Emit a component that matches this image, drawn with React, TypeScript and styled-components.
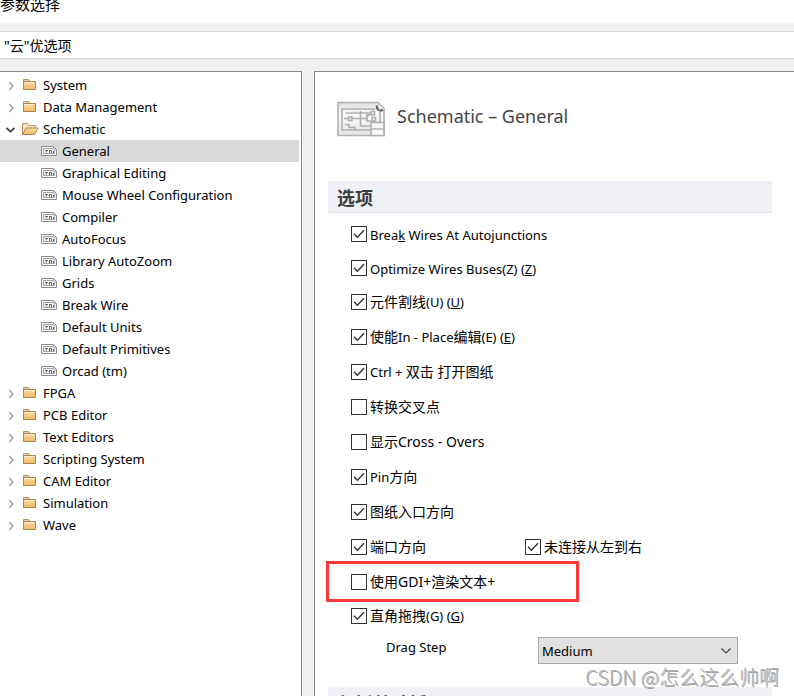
import React from "react";
import styled, { createGlobalStyle, css } from "styled-components";

const Global = createGlobalStyle`
  *, *::before, *::after { box-sizing: border-box; }
  body {
    margin: 0;
    background: #f0f0f0;
    color: #000;
    font: 13px/22px "Noto Sans", "Noto Sans CJK SC", sans-serif;
  }
`;

const Page = styled.div`
  position: relative;
  height: 100vh;
  display: flex;
  flex-direction: column;
  overflow: hidden;
`;
const TitleBar = styled.header`
  flex: none;
  height: 23px;
  background: #fff;
  overflow: hidden;
`;
const Title = styled.h1`
  margin: -7px 0 0;
  font-size: 15px;
  line-height: 22px;
  font-weight: 400;
`;
const SubBar = styled.div`
  flex: none;
  height: 28px;
  margin-top: 8px;
  padding: 0 4px;
  border: solid #d9d9d9;
  border-width: 1px 0;
  background: #fff;
  font-size: 14px;
  line-height: 28px;
`;
const Columns = styled.div`
  flex: 1;
  min-height: 0;
  margin-top: 12px;
  display: grid;
  grid-template-columns: 302px 1fr;
  column-gap: 12px;
`;
const Tree = styled.nav`
  padding: 2px 2px 0 0;
  border: solid #828790;
  border-width: 1px 1px 0 0;
  background: #fff;
`;
const List = styled.ul`
  margin: 0;
  padding: 0;
  list-style: none;
`;
const TreeRow = styled.button<{ $child?: boolean; $selected?: boolean }>`
  display: flex;
  align-items: center;
  width: 100%;
  height: 22px;
  padding: 0 0 0 ${(p) => (p.$child ? 41 : 4)}px;
  border: 0;
  background: ${(p) => (p.$selected ? "#d9d9d9" : "transparent")};
  color: inherit;
  font: inherit;
  text-align: left;
  svg { flex: none; }
`;
const RowIcon = styled.span`
  display: flex;
  width: 21px;
`;
const ArrowSlot = styled.span`
  display: flex;
  width: 18px;
`;

const Content = styled.main`
  min-width: 0;
  padding: 0 22px 0 13px;
  border: solid #828790;
  border-width: 1px 0 0 1px;
  background: #fff;
  overflow: hidden;
`;
const PageHead = styled.div`
  display: flex;
  align-items: flex-start;
  gap: 12px;
  height: 109px;
  padding: 29px 0 0 9px;
`;
const PageTitle = styled.h2`
  margin: 0;
  color: #444;
  font-size: 18px;
  line-height: 30px;
  font-weight: 400;
`;
const SectionHead = styled.h3`
  height: 32px;
  margin: 0;
  padding: 0 9px;
  border-bottom: 1px solid #dfe1e8;
  background: #f0f1f6;
  color: #3c3c3c;
  font-size: 18px;
  line-height: 34px;
  font-weight: 700;
`;
const Options = styled.div`
  padding: 4px 0 0 23px;
`;
const OptionRow = styled.div<{ $compact?: boolean }>`
  position: relative;
  display: grid;
  grid-template-columns: 174px 1fr;
  align-items: center;
  height: ${(p) => (p.$compact ? 34 : 35)}px;
`;
const OptionLabel = styled.label`
  display: flex;
  align-items: center;
  gap: 3px;
  white-space: nowrap;
`;
const Text = styled.span<{ $cjk?: boolean }>`
  line-height: 20px;
  padding-top: 2px;
  ${(p) => p.$cjk && css`
    padding-top: 0;
    font-size: 14px;
  `}
`;
const Latin = styled.span`
  font-size: 13px;
  white-space: pre;
`;
const BoxWrap = styled.span`
  display: grid;
  width: 16px;
  height: 16px;
  > * { grid-area: 1 / 1; }
  svg { pointer-events: none; visibility: hidden; }
  input:checked + svg { visibility: visible; }
`;
const Box = styled.input`
  appearance: none;
  width: 16px;
  height: 16px;
  margin: 0;
  border: 1px solid #333;
  background: #fff;
`;
const Highlight = styled.span`
  position: absolute;
  inset: -3px auto -3px -25px;
  width: 253px;
  border: 3px solid #fc3a3a;
  pointer-events: none;
`;
const StepRow = styled.div`
  display: grid;
  grid-template-columns: 152px 200px;
  padding: 3px 0 23px 35px;
`;
const StepLabel = styled.label`
  line-height: 22px;
`;
const SelectWrap = styled.span`
  display: grid;
  margin-top: 1px;
  > * { grid-area: 1 / 1; }
  svg { place-self: center end; margin-right: 6px; pointer-events: none; }
`;
const Select = styled.select`
  appearance: none;
  height: 27px;
  padding: 0 3px;
  border: 1px solid #adadad;
  border-radius: 0;
  background: #e1e1e1;
  color: #000;
  font: inherit;
`;
const Watermark = styled.div`
  position: absolute;
  right: 15px;
  bottom: 5px;
  color: #b0b0b0;
  font: 20px/28px "Noto Sans CJK SC", sans-serif;
  font-weight: 300;
  text-shadow: 1px 1px 0 #a4a4a4;
  pointer-events: none;
`;

const Chevron = ({ open }: { open?: boolean }) =>
  open ? (
    <svg width="14" height="14" viewBox="0 0 14 14" fill="none" stroke="#404040" strokeWidth="1.7">
      <path d="M2.5 6l4 3.6 4-3.6" />
    </svg>
  ) : (
    <svg width="14" height="14" viewBox="0 0 14 14" fill="none" stroke="#a6a6a6" strokeWidth="1.6">
      <path d="M5.2 4l3.8 4-3.8 4" />
    </svg>
  );

const Folder = ({ open }: { open?: boolean }) => (
  <svg width="17" height="14" viewBox="0 0 17 14">
    <defs>
      <linearGradient id="folder" x1="0" y1="0" x2="0" y2="1">
        <stop offset="0" stopColor="#fbdfae" />
        <stop offset="1" stopColor="#efb660" />
      </linearGradient>
    </defs>
    {open ? (
      <>
        <path d="M.5 12.500V1.500h5l1.500 2h6.500v2" fill="#f7e3be" stroke="#b39463" />
        <path d="M.5 12.500l3.500-6.500h12l-3.500 6.500z" fill="url(#folder)" stroke="#a9864f" />
      </>
    ) : (
      <>
        <path d="M1.500 11.500V1.500h5l1.500 2" fill="#ecd3a3" stroke="#b39463" />
        <path d="M1.500 3.500h12v8h-12z" fill="url(#folder)" stroke="#a9864f" />
        <path d="M2.500 4.500h10" stroke="#fff0d0" />
      </>
    )}
  </svg>
);

const Sheet = () => (
  <svg width="16" height="12" viewBox="0 0 16 12" fill="none" stroke="#8c8c8c">
    <path d="M.5 1.500h12l3 3v6H.5z" fill="#f8f8f8" />
    <path d="M12.500 1.500v3h3" stroke="#b5b5b5" />
    <path d="M2.500 3.500h9.500M2.500 3.500v5h11v-3" stroke="#a2a2a2" />
    <path d="M4 5.500h3M5.500 5.500v2M8.500 5.500h2M8.500 5v3M10.500 5.500v3M12.500 6v2" stroke="#6e6e6e" />
  </svg>
);

const SheetLarge = () => (
  <svg width="48" height="36" viewBox="0 0 48 36" fill="none" stroke="#b0b0b0" strokeWidth="1.6">
    <defs>
      <linearGradient id="sheet" x1="0" y1="0" x2="0" y2="1">
        <stop offset="0" stopColor="#dedede" />
        <stop offset=".35" stopColor="#fafafa" />
        <stop offset="1" stopColor="#e6e6e6" />
      </linearGradient>
    </defs>
    <path d="M1 1.500h40l6 6V34.500H1z" fill="url(#sheet)" />
    <path d="M38 8H5v21h28M43 11v10" />
    <path d="M8.500 12h26M7 17.500h4M15 17.500h15M23.500 10v15h10M8 23.500h4v3h6v3M30 13v7h5M30 15.500l4-3" />
    <path d="M11.500 16h3.500v3.500h-3.500zM34 10.500h3.500v3.500H34zM35 16.500h3.500v3.500H35z" fill="#eee" />
    <path d="M34 21.500h13v13H34zM34 28h13" fill="#fafafa" />
    <path d="M41 1.500c1 2 1 5 0 7 2-1 4-1 6 0z" fill="#fff" stroke="#c4c4c4" strokeWidth="1" />
    <path d="M39 4c-.5 3 .5 6 4.500 6.500 1.500 0 2.500-.5 3-1.500-2-.8-3.500-.5-5 0 .3-2-.5-4-2.500-5z" fill="#555" stroke="none" />
  </svg>
);

function Option({ name, checked, children, latin }: {
  name: string; checked?: boolean; latin?: boolean; children: React.ReactNode;
}) {
  return (
    <OptionLabel htmlFor={name}>
      <BoxWrap>
        <Box id={name} type="checkbox" defaultChecked={checked} />
        <svg width="16" height="16" viewBox="0 0 16 16" fill="none" stroke="#333" strokeWidth="1.4">
          <path d="M3 7.700l3.400 3.600L13 4.300" />
        </svg>
      </BoxWrap>
      <Text $cjk={!latin}>{children}</Text>
    </OptionLabel>
  );
}

const before = ["System", "Data Management"];
const pages = [
  "General", "Graphical Editing", "Mouse Wheel Configuration", "Compiler", "AutoFocus",
  "Library AutoZoom", "Grids", "Break Wire", "Default Units", "Default Primitives", "Orcad (tm)",
];
const after = ["FPGA", "PCB Editor", "Text Editors", "Scripting System", "CAM Editor", "Simulation", "Wave"];

const Branch = ({ label, open, children }: { label: string; open?: boolean; children?: React.ReactNode }) => (
  <li>
    <TreeRow type="button" aria-expanded={!!open}>
      <ArrowSlot><Chevron open={open} /></ArrowSlot>
      <RowIcon><Folder open={open} /></RowIcon>
      {label}
    </TreeRow>
    {children}
  </li>
);

export default function App() {
  return (
    <Page>
      <Global />
      <TitleBar><Title>参数选择</Title></TitleBar>
      <SubBar>"云"优选项</SubBar>
      <Columns>
        <Tree>
          <List>
            {before.map((label) => <Branch key={label} label={label} />)}
            <Branch label="Schematic" open>
              <List>
                {pages.map((label) => (
                  <li key={label}>
                    <TreeRow type="button" $child $selected={label === "General"}>
                      <RowIcon><Sheet /></RowIcon>
                      {label}
                    </TreeRow>
                  </li>
                ))}
              </List>
            </Branch>
            {after.map((label) => <Branch key={label} label={label} />)}
          </List>
        </Tree>
        <Content>
          <PageHead>
            <SheetLarge />
            <PageTitle>Schematic – General</PageTitle>
          </PageHead>
          <SectionHead>选项</SectionHead>
          <Options>
            <OptionRow $compact><Option name="break" checked latin>Brea<u>k</u> Wires At Autojunctions</Option></OptionRow>
            <OptionRow $compact><Option name="optimize" checked latin>Optimize Wires Buses(Z) (<u>Z</u>)</Option></OptionRow>
            <OptionRow $compact><Option name="cut" checked>元件割线<Latin>(U) (<u>U</u>)</Latin></Option></OptionRow>
            <OptionRow><Option name="inplace" checked>使能<Latin>In - Place</Latin>编辑<Latin>(E) (<u>E</u>)</Latin></Option></OptionRow>
            <OptionRow><Option name="ctrl" checked><Latin>Ctrl + </Latin>双击 打开图纸</Option></OptionRow>
            <OptionRow><Option name="convert">转换交叉点</Option></OptionRow>
            <OptionRow><Option name="cross">显示Cross - Overs</Option></OptionRow>
            <OptionRow><Option name="pin" checked><Latin>Pin</Latin>方向</Option></OptionRow>
            <OptionRow><Option name="entry" checked>图纸入口方向</Option></OptionRow>
            <OptionRow>
              <Option name="port" checked>端口方向</Option>
              <Option name="unconnected" checked>未连接从左到右</Option>
            </OptionRow>
            <OptionRow>
              <Option name="gdi">使用GDI+渲染文本+</Option>
              <Highlight />
            </OptionRow>
            <OptionRow $compact><Option name="drag" checked>直角拖拽<Latin>(G) (<u>G</u>)</Latin></Option></OptionRow>
            <StepRow>
              <StepLabel htmlFor="step">Drag Step</StepLabel>
              <SelectWrap>
                <Select id="step" defaultValue="Medium">
                  <option>Small</option>
                  <option>Medium</option>
                  <option>Large</option>
                </Select>
                <svg width="12" height="8" viewBox="0 0 12 8" fill="none" stroke="#444" strokeWidth="1.2">
                  <path d="M1.500 1.500L6 6l4.500-4.500" />
                </svg>
              </SelectWrap>
            </StepRow>
          </Options>
          <SectionHead>包括剪贴板</SectionHead>
        </Content>
      </Columns>
      <Watermark>CSDN @怎么这么帅啊</Watermark>
    </Page>
  );
}
